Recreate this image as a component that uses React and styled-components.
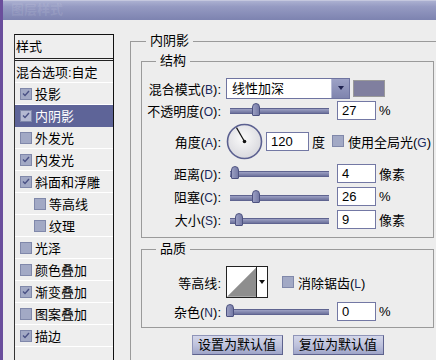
import React from "react";
import styled, { createGlobalStyle } from "styled-components";

const Global = createGlobalStyle`
  html, body { margin: 0; padding: 0; background: #ededed; }
  body { font-family: "Liberation Sans", "Noto Sans CJK SC", sans-serif; font-size: 13px; color: #000; }
  #root { width: 436px; height: 360px; overflow: hidden; }
`;

const Window = styled.div`
  width: 436px;
  height: 360px;
  box-sizing: border-box;
  border-left: 3px solid #6a4e9c;
  display: flex;
  flex-direction: column;
  overflow: hidden;
  background: #ededed;
`;

const TitleBar = styled.div`
  height: 20px;
  flex: none;
  background: linear-gradient(#abb0d1 0%, #959ac2 30%, #7d83b0 100%);
  border-top: 1px solid #c4c7de;
  box-sizing: border-box;
  padding-left: 8px;
  line-height: 18px;
  font-size: 13px;
  font-weight: bold;
  color: rgba(255, 255, 255, 0.1);
`;

const Body = styled.div`
  flex: 1;
  display: flex;
  align-items: flex-start;
  gap: 16px;
  padding: 14px 0 0 11px;
  overflow: hidden;
`;

const StyleList = styled.div`
  width: 100px;
  height: 340px;
  flex: none;
  box-sizing: border-box;
  border: 1px solid #111;
  border-left-color: #333;
  background: #eeeeee;
`;

const ListHeader = styled.div`
  height: 23px;
  line-height: 23px;
  padding-left: 1px;
  border-bottom: 3px double #222;
  font-size: 13px;
`;

const ListRow = styled.div`
  height: 21px;
  border-bottom: 1px solid #ffffff;
  display: flex;
  align-items: center;
  gap: 3px;
  padding-left: ${(p) => (p.$plain ? 1 : p.$indent ? 19 : 5)}px;
  font-size: 13px;
  background: ${(p) => (p.$selected ? "#5e6498" : "transparent")};
  color: ${(p) => (p.$selected ? "#ffffff" : "#000")};
  border-bottom-color: ${(p) => (p.$selected ? "#5e6498" : "#ffffff")};
`;

const Box = styled.span`
  width: 12px;
  height: 12px;
  flex: none;
  box-sizing: border-box;
  border: 1px solid #8088aa;
  background: ${(p) => (p.$light ? "#b4b9d2" : "#a2a9c5")};
  display: inline-flex;
  align-items: center;
  justify-content: center;
`;

const Check = ({ checked, light }) => (
  <Box $light={light}>
    {checked && (
      <svg width="8" height="7" viewBox="0 0 8 7">
        <path d="M1 3.5 L3 5.5 L7 1" stroke="#4a5185" strokeWidth="1.4" fill="none" />
      </svg>
    )}
  </Box>
);

const Panel = styled.fieldset`
  margin: 0;
  padding: 0;
  min-width: 0;
  width: 316px;
  height: 360px;
  flex: none;
  box-sizing: border-box;
  border: 1px solid #9a9a9a;
`;

const Legend = styled.legend`
  padding: 0 4px;
  margin-left: ${(p) => p.$offset}px;
  font-size: 13px;
  line-height: 14px;
  height: 14px;
`;

const PanelContent = styled.div`
  padding: 6px 0 0 10px;
`;

const Group = styled.fieldset`
  margin: ${(p) => p.$top}px 0 0 0;
  padding: 0;
  min-width: 0;
  width: 293px;
  box-sizing: border-box;
  border: 1px solid #9a9a9a;
`;

const GroupBody = styled.div`
  padding: 9px 0 ${(p) => p.$bottom}px 0;
  display: flex;
  flex-direction: column;
`;

const Row = styled.div`
  height: ${(p) => p.$h}px;
  display: flex;
  align-items: center;
`;

const Label = styled.span`
  width: 79px;
  flex: none;
  text-align: right;
  margin-right: 5px;
  white-space: nowrap;
  font-size: 13px;
`;

const Key = styled.span`
  font-size: 12px;
  color: #1a2a60;
`;

const Select = styled.div`
  width: 124px;
  height: 21px;
  box-sizing: border-box;
  border: 1px solid #6f74a0;
  background: #fff;
  display: flex;
`;

const SelectText = styled.span`
  flex: 1;
  padding-left: 5px;
  line-height: 19px;
`;

const SelectButton = styled.span`
  width: 17px;
  background: linear-gradient(#9da2c6, #7f84ae);
  border-left: 1px solid #b8bcd6;
  display: flex;
  align-items: center;
  justify-content: center;
`;

const Swatch = styled.span`
  width: 32px;
  height: 17px;
  margin-left: 3px;
  box-sizing: border-box;
  border: 1px solid #9a9a9a;
  background: #807f9f;
`;

const SliderWrap = styled.div`
  position: relative;
  width: 107px;
  height: 16px;
  flex: none;
`;

const Track = styled.div`
  position: absolute;
  left: 4px;
  right: 4px;
  top: 6px;
  height: 4px;
  background: linear-gradient(#9da1c4, #6d729c);
  border-top: 1px solid #5f6490;
  border-bottom: 1px solid #5f6490;
`;

const Thumb = styled.div`
  position: absolute;
  top: 1px;
  width: 8px;
  height: 13px;
  box-sizing: border-box;
  border: 1px solid #4d5280;
  border-radius: 4px 4px 1px 1px;
  background: linear-gradient(90deg, #9a9ec2, #767ba6);
`;

const Slider = ({ center }) => (
  <SliderWrap>
    <Track />
    <Thumb style={{ left: center - 227 - 4 }} />
  </SliderWrap>
);

const Input = styled.div`
  width: ${(p) => p.$w || 39}px;
  height: 19px;
  margin-left: ${(p) => p.$gap || 4}px;
  flex: none;
  box-sizing: border-box;
  border: 1px solid #7378a4;
  background: #fff;
  padding-left: 4px;
  line-height: 17px;
  font-size: 13px;
`;

const Unit = styled.span`
  margin-left: ${(p) => p.$gap || 3}px;
  font-size: 13px;
  white-space: nowrap;
`;

const CheckLabel = styled.span`
  display: flex;
  align-items: center;
  gap: 4px;
  margin-left: ${(p) => p.$gap}px;
  white-space: nowrap;
`;

const ContourBox = styled.div`
  width: 42px;
  height: 32px;
  box-sizing: border-box;
  border: 1px solid #222;
  background: #fff;
  display: flex;
`;

const ContourArrow = styled.span`
  width: 10px;
  border-left: 1px solid #222;
  display: flex;
  align-items: center;
  justify-content: center;
`;

const Buttons = styled.div`
  width: 293px;
  display: flex;
  justify-content: center;
  gap: 10px;
  margin-top: 7px;
`;

const Button = styled.div`
  width: 91px;
  height: 20px;
  box-sizing: border-box;
  border: 1px solid #5d628e;
  border-top-color: #8f94b8;
  border-left-color: #8f94b8;
  background: linear-gradient(#d3d6e9 0%, #bcc0db 55%, #9ea4c8 100%);
  text-align: center;
  line-height: 18px;
  font-size: 13px;
`;

const Dial = () => (
  <svg width="37" height="37" viewBox="0 0 37 37">
    <defs>
      <radialGradient id="dg" cx="45%" cy="40%" r="60%">
        <stop offset="0%" stopColor="#fafafa" />
        <stop offset="100%" stopColor="#d9d9de" />
      </radialGradient>
    </defs>
    <circle cx="18.5" cy="18.5" r="17" fill="url(#dg)" stroke="#5b6090" strokeWidth="1.6" />
    <line x1="18.5" y1="18.5" x2="10.5" y2="4.6" stroke="#111" strokeWidth="1.2" />
    <circle cx="18.5" cy="18.5" r="1.8" fill="#111" />
  </svg>
);

const Arrow = ({ color }) => (
  <svg width="6" height="4" viewBox="0 0 6 4">
    <path d="M0 0 H6 L3 4 Z" fill={color} />
  </svg>
);

const items = [
  { t: "投影", c: true },
  { t: "内阴影", c: true, s: true },
  { t: "外发光", c: false },
  { t: "内发光", c: true },
  { t: "斜面和浮雕", c: true },
  { t: "等高线", c: false, i: true },
  { t: "纹理", c: false, i: true },
  { t: "光泽", c: false },
  { t: "颜色叠加", c: false },
  { t: "渐变叠加", c: true },
  { t: "图案叠加", c: false },
  { t: "描边", c: true },
];

const L = ({ text, k }) => (
  <Label>
    {text}
    {k && (
      <>
        (<Key>{k}</Key>)
      </>
    )}
    :
  </Label>
);

export default function App() {
  return (
    <>
      <Global />
      <Window>
        <TitleBar>图层样式</TitleBar>
        <Body>
          <StyleList>
            <ListHeader>样式</ListHeader>
            <ListRow $plain>混合选项:自定</ListRow>
            {items.map((it) => (
              <ListRow key={it.t} $indent={it.i} $selected={it.s}>
                <Check checked={it.c} light={it.s} />
                {it.t}
              </ListRow>
            ))}
          </StyleList>
          <Panel>
            <Legend $offset={15}>内阴影</Legend>
            <PanelContent>
              <Group $top={0}>
                <Legend $offset={14}>结构</Legend>
                <GroupBody $bottom={6}>
                  <Row $h={22}>
                    <L text="混合模式" k="B" />
                    <Select>
                      <SelectText>线性加深</SelectText>
                      <SelectButton>
                        <Arrow color="#1e2250" />
                      </SelectButton>
                    </Select>
                    <Swatch />
                  </Row>
                  <Row $h={22}>
                    <L text="不透明度" k="O" />
                    <Slider center={257} />
                    <Input>27</Input>
                    <Unit>%</Unit>
                  </Row>
                  <Row $h={40}>
                    <L text="角度" k="A" />
                    <Dial />
                    <Input $w={43} $gap={3}>120</Input>
                    <Unit>度</Unit>
                    <CheckLabel $gap={7}>
                      <Check checked={false} />
                      <span>
                        使用全局光(<Key>G</Key>)
                      </span>
                    </CheckLabel>
                  </Row>
                  <Row $h={24}>
                    <L text="距离" k="D" />
                    <Slider center={236} />
                    <Input>4</Input>
                    <Unit>像素</Unit>
                  </Row>
                  <Row $h={23}>
                    <L text="阻塞" k="C" />
                    <Slider center={257} />
                    <Input>26</Input>
                    <Unit>%</Unit>
                  </Row>
                  <Row $h={23}>
                    <L text="大小" k="S" />
                    <Slider center={240} />
                    <Input>9</Input>
                    <Unit>像素</Unit>
                  </Row>
                </GroupBody>
              </Group>
              <Group $top={4}>
                <Legend $offset={14}>品质</Legend>
                <GroupBody $bottom={4}>
                  <Row $h={34}>
                    <L text="等高线" />
                    <ContourBox>
                      <svg width="30" height="30" viewBox="0 0 30 30">
                        <path d="M0 30 L30 0 V30 Z" fill="#8e8e8e" />
                      </svg>
                      <ContourArrow>
                        <Arrow color="#111" />
                      </ContourArrow>
                    </ContourBox>
                    <CheckLabel $gap={14}>
                      <Check checked={false} />
                      <span>
                        消除锯齿(<Key>L</Key>)
                      </span>
                    </CheckLabel>
                  </Row>
                  <Row $h={24}>
                    <L text="杂色" k="N" />
                    <Slider center={231} />
                    <Input>0</Input>
                    <Unit>%</Unit>
                  </Row>
                </GroupBody>
              </Group>
              <Buttons>
                <Button>设置为默认值</Button>
                <Button>复位为默认值</Button>
              </Buttons>
            </PanelContent>
          </Panel>
        </Body>
      </Window>
    </>
  );
}
